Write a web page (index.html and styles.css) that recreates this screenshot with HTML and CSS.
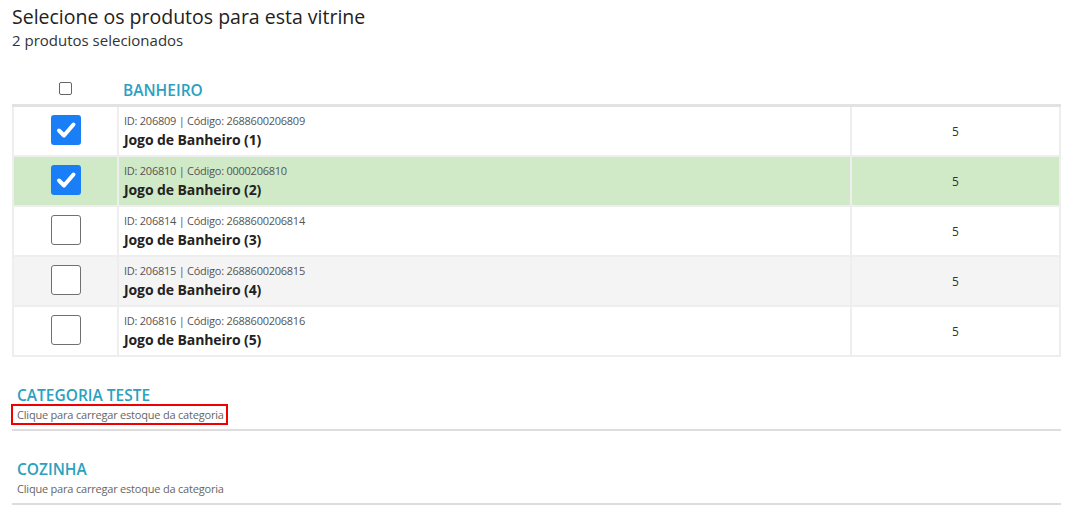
FILE: index.html
```html
<!DOCTYPE html>
<html lang="pt">
<head>
<meta charset="utf-8">
<title>Vitrine</title>
<link rel="stylesheet" href="styles.css">
</head>
<body>
<div class="page">
  <header class="head">
    <h1 class="title">Selecione os produtos para esta vitrine</h1>
    <div class="subtitle">2 produtos selecionados</div>
  </header>

  <table class="grid">
    <colgroup>
      <col class="c-check">
      <col class="c-prod">
      <col class="c-qty">
    </colgroup>
    <thead>
      <tr>
        <th class="th-check"><span class="mini-box"></span></th>
        <th class="th-cat" colspan="2">BANHEIRO</th>
      </tr>
    </thead>
    <tbody>
      <tr>
        <td class="td-check"><span class="box on"><svg viewBox="0 0 30 30" width="30" height="30"><path d="M8 15.5 L13 20.5 L22.5 9.5" fill="none" stroke="#fff" stroke-width="4" stroke-linecap="round" stroke-linejoin="round"/></svg></span></td>
        <td class="td-prod"><div class="meta">ID: 206809 | Código: 2688600206809</div><div class="name">Jogo de Banheiro (1)</div></td>
        <td class="td-qty">5</td>
      </tr>
      <tr class="sel">
        <td class="td-check"><span class="box on"><svg viewBox="0 0 30 30" width="30" height="30"><path d="M8 15.5 L13 20.5 L22.5 9.5" fill="none" stroke="#fff" stroke-width="4" stroke-linecap="round" stroke-linejoin="round"/></svg></span></td>
        <td class="td-prod"><div class="meta">ID: 206810 | Código: 0000206810</div><div class="name">Jogo de Banheiro (2)</div></td>
        <td class="td-qty">5</td>
      </tr>
      <tr>
        <td class="td-check"><span class="box"></span></td>
        <td class="td-prod"><div class="meta">ID: 206814 | Código: 2688600206814</div><div class="name">Jogo de Banheiro (3)</div></td>
        <td class="td-qty">5</td>
      </tr>
      <tr class="alt">
        <td class="td-check"><span class="box"></span></td>
        <td class="td-prod"><div class="meta">ID: 206815 | Código: 2688600206815</div><div class="name">Jogo de Banheiro (4)</div></td>
        <td class="td-qty">5</td>
      </tr>
      <tr>
        <td class="td-check"><span class="box"></span></td>
        <td class="td-prod"><div class="meta">ID: 206816 | Código: 2688600206816</div><div class="name">Jogo de Banheiro (5)</div></td>
        <td class="td-qty">5</td>
      </tr>
    </tbody>
  </table>

  <section class="cat">
    <div class="cat-name">CATEGORIA TESTE</div>
    <div class="cat-hint"><span class="marked">Clique para carregar estoque da categoria</span></div>
  </section>

  <section class="cat">
    <div class="cat-name">COZINHA</div>
    <div class="cat-hint"><span>Clique para carregar estoque da categoria</span></div>
  </section>
</div>
</body>
</html>
```

FILE: styles.css
```css
html, body {
  margin: 0;
  padding: 0;
  background: #fff;
}

body {
  font-family: "Open Sans", "Noto Sans", Arial, sans-serif;
  color: #333;
}

.page {
  padding: 0 14px 0 12px;
}

.head {
  padding-top: 4px;
}

.title {
  margin: 0;
  font-size: 19.5px;
  font-weight: 400;
  line-height: 26px;
  color: #222;
}

.subtitle {
  font-size: 15px;
  line-height: 21px;
  color: #333;
}

.grid {
  width: 100%;
  margin-top: 23px;
  border-collapse: collapse;
  table-layout: fixed;
}

.c-check { width: 105px; }
.c-qty { width: 209px; }

.grid thead th {
  height: 29px;
  padding: 0;
  border-bottom: 3px solid #e2e2e2;
  text-align: left;
  vertical-align: middle;
}

.th-check {
  text-align: center !important;
}

.mini-box {
  display: inline-block;
  width: 11px;
  height: 11px;
  border: 1px solid #666;
  border-radius: 2px;
  vertical-align: middle;
  position: relative;
  top: -2px;
}

.th-cat {
  color: #2aa1bf;
  font-size: 15.5px;
  font-weight: 600;
  padding-left: 5px !important;
  padding-top: 1px !important;
}

.grid tbody td {
  height: 48px;
  padding: 0;
  border: 2px solid #eeeeee;
  vertical-align: middle;
}

.grid tbody tr:first-child td {
  border-top: 0;
}

.grid tbody tr.sel td {
  background: #d0e9c6;
}

.grid tbody tr.alt td {
  background: #f4f4f4;
}

.td-check {
  text-align: center;
}

.box {
  display: inline-block;
  width: 28px;
  height: 28px;
  border: 1px solid #707070;
  border-radius: 3px;
  background: #fff;
  vertical-align: middle;
  position: relative;
  top: -1px;
}

.box.on {
  width: 30px;
  height: 30px;
  border: 0;
  background: #1a7ef7;
}

.box svg {
  display: block;
}

.td-prod {
  padding-left: 5px !important;
}

.meta {
  font-size: 11px;
  line-height: 15px;
  color: #555;
  letter-spacing: -0.25px;
}

.name {
  font-size: 14px;
  font-weight: 700;
  line-height: 18px;
  margin-top: 3px;
  color: #222;
  letter-spacing: -0.1px;
}

.td-qty {
  text-align: center;
  font-size: 12px;
  color: #333;
}

.cat {
  border-bottom: 2px solid #dddddd;
  padding: 29px 0 4px 0;
}

.cat-name {
  color: #2aa1bf;
  font-size: 15.5px;
  font-weight: 600;
  line-height: 18px;
  padding-left: 5px;
}

.cat-hint {
  font-size: 11px;
  line-height: 17px;
  color: #666;
  letter-spacing: -0.2px;
}

.cat-hint span {
  display: inline-block;
  padding: 0 2px 0 4px;
  border: 2px solid transparent;
  margin-left: -1px;
  line-height: 17px;
  vertical-align: top;
}

.cat-hint .marked {
  border-color: #f00000;
}
```
